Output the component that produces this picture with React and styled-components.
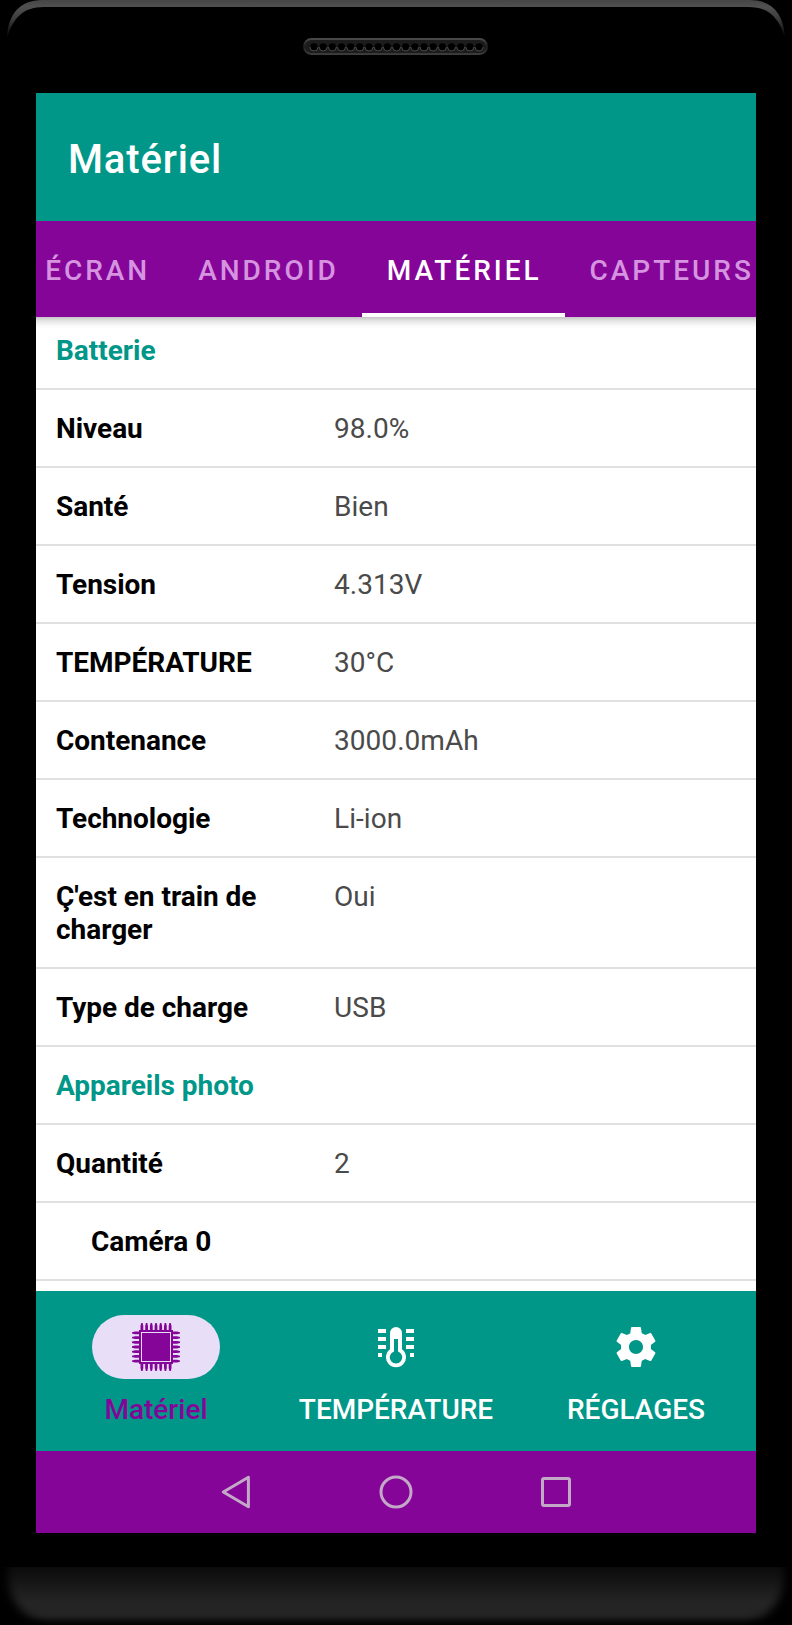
import React from 'react';
import styled, { createGlobalStyle } from 'styled-components';

const GlobalStyle = createGlobalStyle`
  * {
    box-sizing: border-box;
  }
  body {
    margin: 0;
    background: #000;
    font-family: Roboto, 'Liberation Sans', sans-serif;
  }
`;

const Phone = styled.div`
  display: flex;
  flex-direction: column;
  width: 792px;
  height: 1625px;
  background: #000;
  overflow: hidden;
`;

const TopBezel = styled.div`
  display: flex;
  justify-content: center;
  height: 93px;
  flex-shrink: 0;
`;

const Screen = styled.div`
  display: flex;
  flex-direction: column;
  width: 720px;
  height: 1440px;
  margin: 0 36px;
  flex-shrink: 0;
  background: #fff;
`;

const BottomBezel = styled.div`
  height: 58px;
  margin-top: 34px;
  flex-shrink: 0;
`;

const AppBar = styled.header`
  display: flex;
  align-items: center;
  height: 128px;
  padding: 4px 32px 0;
  flex-shrink: 0;
  background: #009788;
  color: #fff;
  font-size: 40px;
  font-weight: 500;
  letter-spacing: 0.85px;
`;

const TabBar = styled.nav`
  display: flex;
  justify-content: center;
  height: 96px;
  padding-left: 5px;
  flex-shrink: 0;
  background: #850599;
  overflow: hidden;
`;

const Tab = styled.div`
  display: flex;
  align-items: center;
  flex-shrink: 0;
  padding: 6px 23px 0 25px;
  border-bottom: 4px solid ${props => (props.$active ? '#fff' : 'transparent')};
  color: ${props => (props.$active ? '#fff' : '#d693e0')};
  font-size: 28px;
  font-weight: 500;
  letter-spacing: 2.97px;
`;

const List = styled.main`
  flex: 1;
  min-height: 0;
  overflow: hidden;
  background: linear-gradient(#c4c4c4, #e6e6e6 4px, #fafafa 9px, #fff 12px);
`;

const Row = styled.div`
  display: flex;
  min-height: ${props => (props.$first ? '73px' : '78px')};
  padding: ${props => (props.$first ? '17px' : '22px')} 20px 21px ${props => (props.$indent ? '55px' : '20px')};
  border-bottom: 2px solid #e0e0e0;
  font-size: 28px;
  line-height: 33px;
`;

const Label = styled.div`
  width: 258px;
  margin-right: 20px;
  flex-shrink: 0;
  color: ${props => (props.$section ? '#009788' : '#000')};
  font-weight: 700;
  letter-spacing: -0.03px;
`;

const Value = styled.div`
  color: #4a4a4a;
  letter-spacing: 0.05px;
`;

const BottomNav = styled.nav`
  display: flex;
  height: 160px;
  flex-shrink: 0;
  background: #009788;
`;

const NavItem = styled.div`
  display: flex;
  flex-direction: column;
  align-items: center;
  width: 240px;
  padding-top: 24px;
  color: ${props => (props.$active ? '#850599' : '#fff')};
  font-size: 28px;
  font-weight: 500;
  line-height: 32px;
`;

const NavPill = styled.div`
  display: flex;
  align-items: center;
  justify-content: center;
  width: 128px;
  height: 64px;
  margin-bottom: 15px;
  border-radius: 32px;
  background: ${props => (props.$active ? '#e8def8' : 'transparent')};
  color: ${props => (props.$active ? '#850599' : '#fff')};
`;

const SystemBar = styled.div`
  display: flex;
  align-items: center;
  justify-content: center;
  gap: 112px;
  height: 82px;
  flex-shrink: 0;
  background: #850599;
  color: #c4a8c8;
`;

const TopEdge = () => (
  <svg width="792" height="93" viewBox="0 0 792 93">
    <defs>
      <linearGradient id="edge" x1="0" y1="0" x2="0" y2="1">
        <stop offset="0" stopColor="#454545" />
        <stop offset="0.18" stopColor="#505050" />
        <stop offset="0.5" stopColor="#3c3c3c" />
        <stop offset="1" stopColor="#000" />
      </linearGradient>
      <linearGradient id="grille" x1="0" y1="0" x2="0" y2="1">
        <stop offset="0" stopColor="#4a4a4a" />
        <stop offset="0.5" stopColor="#1c1c1c" />
        <stop offset="1" stopColor="#3c3c3c" />
      </linearGradient>
    </defs>
    <path d="M7 38 C8 14 20 0 42 0 H750 C772 0 784 14 785 38 C779 19 770 7 748 7 H44 C22 7 13 19 7 38Z" fill="url(#edge)" />
    <rect x="304" y="39" width="183" height="15" rx="7.5" fill="#1c1c1c" stroke="url(#grille)" strokeWidth="2" />
    {Array.from({ length: 19 }, (_, i) => (
      <g key={i} transform={`translate(${314 + i * 9.17} 47)`}>
        <circle r="3.8" fill="#000" />
        <path d="M-4 0A4 4 0 0 0 4 0" fill="none" stroke="#484848" strokeWidth="1" />
      </g>
    ))}
  </svg>
);

const BottomEdge = () => (
  <svg width="792" height="58" viewBox="0 0 792 58">
    <defs>
      <linearGradient id="chin" x1="0" y1="0" x2="0" y2="1">
        <stop offset="0" stopColor="#0b0b0b" />
        <stop offset="0.6" stopColor="#242424" />
        <stop offset="0.85" stopColor="#242424" />
        <stop offset="1" stopColor="#0c0c0c" />
      </linearGradient>
      <filter id="soft" x="-5%" y="-50%" width="110%" height="200%">
        <feGaussianBlur stdDeviation="4" />
      </filter>
      <mask id="chinMask">
        <path d="M8 -30 H784 V8 C784 36 766 55 740 55 H52 C26 55 8 36 8 8Z" fill="#fff" filter="url(#soft)" />
      </mask>
    </defs>
    <rect width="792" height="58" fill="url(#chin)" mask="url(#chinMask)" />
  </svg>
);

const pins = [-14.1, -9.4, -4.7, 0, 4.7, 9.4, 14.1];

const ChipIcon = () => (
  <svg width="48" height="48" viewBox="-24 -24 48 48" fill="currentColor">
    <rect x="-16" y="-16" width="32" height="32" fill="none" stroke="currentColor" strokeWidth="2" />
    <rect x="-14" y="-14" width="28" height="28" />
    {[0, 90, 180, 270].map(angle => (
      <g key={angle} transform={`rotate(${angle})`}>
        {pins.map(p => (
          <path key={p} d={`M${p - 1.4} -16V-21L${p - 0.7} -24H${p + 0.7}L${p + 1.4} -21V-16Z`} />
        ))}
      </g>
    ))}
    <rect x="-14.5" y="-14.5" width="29" height="29" fill="none" stroke="#e8def8" strokeWidth="1" />
  </svg>
);

const ThermometerIcon = () => (
  <svg width="48" height="48" viewBox="-24 -24 48 48" fill="currentColor">
    <path
      fillRule="evenodd"
      d="M-6 -14A6 6 0 0 1 6 -14V2.3A10 10 0 1 1 -6 2.3ZM-2 -8V4.4A6.2 6.2 0 1 0 2 4.4V-8Z"
    />
    <path d="M-18 -18h8v4h-8zM-18 -10h8v4h-8zM-18 -2h8v4h-8zM-18 6h4v4h-4zM10 -18h8v4h-8zM10 -10h8v4h-8zM10 -2h8v4h-8zM14 6h4v4h-4z" />
  </svg>
);

const GearIcon = () => (
  <svg width="48" height="48" viewBox="0 0 24 24" fill="currentColor">
    <path d="M19.43 12.98c.04-.32.07-.64.07-.98s-.03-.66-.07-.98l2.11-1.65c.19-.15.24-.42.12-.64l-2-3.46c-.12-.22-.39-.3-.61-.22l-2.49 1c-.52-.4-1.08-.73-1.69-.98l-.38-2.65C14.46 2.18 14.25 2 14 2h-4c-.25 0-.46.18-.49.42l-.38 2.65c-.61.25-1.17.59-1.69.98l-2.49-1c-.23-.09-.49 0-.61.22l-2 3.46c-.13.22-.07.49.12.64l2.11 1.65c-.04.32-.07.65-.07.98s.03.66.07.98l-2.11 1.65c-.19.15-.24.42-.12.64l2 3.46c.12.22.39.3.61.22l2.49-1c.52.4 1.08.73 1.69.98l.38 2.65c.03.24.24.42.49.42h4c.25 0 .46-.18.49-.42l.38-2.65c.61-.25 1.17-.59 1.69-.98l2.49 1c.23.09.49 0 .61-.22l2-3.46c.12-.22.07-.49-.12-.64l-2.11-1.65zM12 15.5c-1.93 0-3.5-1.57-3.5-3.5s1.57-3.5 3.5-3.5 3.5 1.57 3.5 3.5-1.57 3.5-3.5 3.5z" />
  </svg>
);

const BackIcon = () => (
  <svg width="48" height="48" viewBox="-24 -24 48 48" fill="none" stroke="currentColor" strokeWidth="3" strokeLinejoin="round">
    <path d="M-12.7 0L12.4 -14.8V14.8Z" />
  </svg>
);

const HomeIcon = () => (
  <svg width="48" height="48" viewBox="-24 -24 48 48" fill="none" stroke="currentColor" strokeWidth="3">
    <circle r="15" />
  </svg>
);

const RecentIcon = () => (
  <svg width="48" height="48" viewBox="-24 -24 48 48" fill="none" stroke="currentColor" strokeWidth="3">
    <rect x="-13.5" y="-13.5" width="27" height="27" rx="1.5" />
  </svg>
);

const tabs = ['ÉCRAN', 'ANDROID', 'MATÉRIEL', 'CAPTEURS'];

const rows = [
  { label: 'Batterie', section: true },
  { label: 'Niveau', value: '98.0%' },
  { label: 'Santé', value: 'Bien' },
  { label: 'Tension', value: '4.313V' },
  { label: 'TEMPÉRATURE', value: '30°C' },
  { label: 'Contenance', value: '3000.0mAh' },
  { label: 'Technologie', value: 'Li-ion' },
  { label: "Ç'est en train de charger", value: 'Oui' },
  { label: 'Type de charge', value: 'USB' },
  { label: 'Appareils photo', section: true },
  { label: 'Quantité', value: '2' },
  { label: 'Caméra 0', indent: true },
];

const navItems = [
  { label: 'Matériel', icon: ChipIcon },
  { label: 'TEMPÉRATURE', icon: ThermometerIcon },
  { label: 'RÉGLAGES', icon: GearIcon },
];

const App = () => (
  <Phone>
    <GlobalStyle />
    <TopBezel>
      <TopEdge />
    </TopBezel>
    <Screen>
      <AppBar>Matériel</AppBar>
      <TabBar>
        {tabs.map(tab => (
          <Tab key={tab} $active={tab === 'MATÉRIEL'}>{tab}</Tab>
        ))}
      </TabBar>
      <List>
        {rows.map((row, i) => (
          <Row key={row.label} $first={i === 0} $indent={row.indent}>
            <Label $section={row.section}>{row.label}</Label>
            {row.value && <Value>{row.value}</Value>}
          </Row>
        ))}
      </List>
      <BottomNav>
        {navItems.map(({ label, icon: Icon }, i) => (
          <NavItem key={label} $active={i === 0}>
            <NavPill $active={i === 0}><Icon /></NavPill>
            {label}
          </NavItem>
        ))}
      </BottomNav>
      <SystemBar>
        <BackIcon />
        <HomeIcon />
        <RecentIcon />
      </SystemBar>
    </Screen>
    <BottomBezel>
      <BottomEdge />
    </BottomBezel>
  </Phone>
);

export default App;
